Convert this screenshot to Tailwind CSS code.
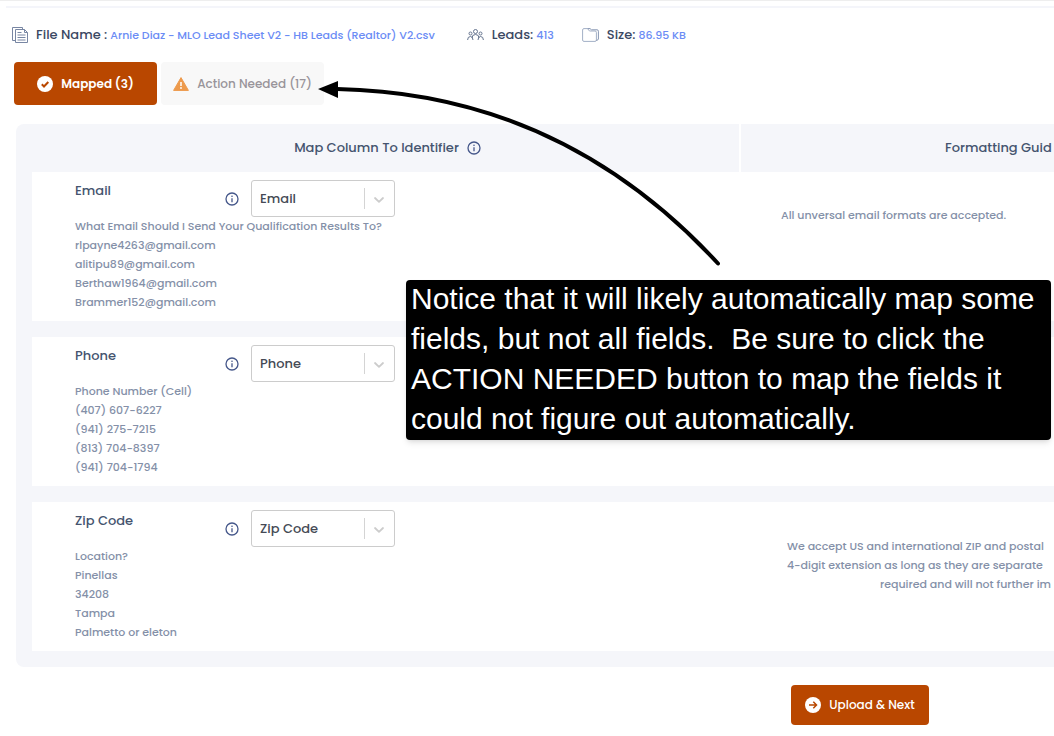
<!DOCTYPE html>
<html lang="en">
<head>
<meta charset="utf-8">
<title>Map columns</title>
<script src="https://cdn.jsdelivr.net/npm/@tailwindcss/browser@4"></script>
</head>
<body class="relative min-h-screen overflow-x-hidden bg-white font-['Poppins','Inter',sans-serif] text-[#8490a8]">
<svg class="hidden">
  <symbol id="info" viewBox="0 0 14 14"><circle cx="7" cy="7" r="6" fill="none" stroke="currentColor" stroke-width="1.3"/><path d="M7 6.2v4" stroke="currentColor" stroke-width="1.3"/><circle cx="7" cy="4.2" r=".8" fill="currentColor"/></symbol>
  <symbol id="chevron" viewBox="0 0 12 8"><path d="M2 2 6 5.800l4-3.800" fill="none" stroke="currentColor" stroke-width="1.8" stroke-linecap="round" stroke-linejoin="round"/></symbol>
</svg>
<div class="h-px bg-[#eeeeee]"></div>
<div class="mt-[5px] ml-1.5 h-0.5 bg-[#f4f5fa]"></div>

<header class="flex items-center pt-4 pl-3 text-[13px] leading-[22px] font-medium whitespace-nowrap text-[#3b4863]">
  <svg class="mr-2 size-4 shrink-0" viewBox="0 0 16 16" fill="none" stroke="#7886a3" stroke-width="1"><path d="M3.500 13.500H.500V.500h10v2"/><path d="M3.500 2.500h9l3 3v10h-12z"/><path d="M12.500 2.500v3h3M5.500 5.500h4M5.500 8h8M5.500 10.500h8M5.500 13h8"/></svg>
  <span>File Name :</span>
  <span class="ml-[3px] text-[11px] text-[#6b8cf5]">Arnie Diaz - MLO Lead Sheet V2 - HB Leads (Realtor) V2.csv</span>
  <svg class="mr-2 ml-8 h-3 w-[17px] shrink-0" viewBox="0 0 17 12" fill="none" stroke="#66758f" stroke-width="1"><circle cx="8.500" cy="2.500" r="2"/><circle cx="3.500" cy="4.500" r="1.500"/><circle cx="13.500" cy="4.500" r="1.500"/><path d="M5 9q0-3.500 3.500-3.500T12 9M.600 11q0-3.500 2.900-3.500Q5.800 7.500 6 11M16.400 11q0-3.500-2.900-3.500-2.300 0-2.500 3.500"/></svg>
  <span>Leads:</span>
  <span class="ml-[3px] text-[11px] text-[#6b8cf5]">413</span>
  <svg class="mr-2 ml-7 h-[14px] w-[17px] shrink-0" viewBox="0 0 17 14" fill="none" stroke="#a3b0c6" stroke-width="1"><path d="M.600 12V2Q.600.600 2 .600h3.500l2 2.400h5.500q1.400 0 1.400 1.400V12q0 1.400-1.400 1.400H2Q.600 13.400.600 12z"/><path d="M5.500.600h2.500l1.500 1.200h5.500q1.400 0 1.400 1.400V11q0 1-2 1.500" stroke="#8796b2"/></svg>
  <span>Size:</span>
  <span class="ml-[3px] text-[11px] text-[#6b8cf5]">86.95 KB</span>
</header>

<nav class="mt-4 flex gap-1 pl-3.5 text-xs font-semibold">
  <button class="flex h-[43px] w-[143px] items-center justify-center gap-2 rounded bg-[#b94700] text-white">
    <svg class="size-4" viewBox="0 0 16 16"><circle cx="8" cy="8" r="8" fill="#fff"/><path d="m4.800 8.300 2.200 2.200 4.300-4.500" fill="none" stroke="#b94700" stroke-width="2"/></svg>
    Mapped (3)
  </button>
  <button class="flex h-[43px] w-[163px] items-center justify-center gap-2 rounded bg-[#f8f8f8] font-medium text-[#98949a]">
    <svg class="h-[14px] w-4" viewBox="0 0 16 14"><path d="M8 .600 15.400 13.400H.600z" fill="#ed9a4c" stroke="#ed9a4c" stroke-linejoin="round"/><path d="M8 5v4" stroke="#fff" stroke-width="1.500"/><circle cx="8" cy="11" r=".9" fill="#fff"/></svg>
    Action Needed (17)
  </button>
</nav>

<main class="mt-[19px] ml-4 rounded-l-lg bg-[#f5f6fa] pb-4">
  <div class="flex h-12 text-[13px] font-medium text-[#45546f]">
    <h2 class="flex w-[725px] shrink-0 items-center justify-center gap-2 border-r-2 border-white pl-5">Map Column To Identifier <svg class="size-3.5 text-[#45578a]"><use href="#info"/></svg></h2>
    <h2 class="flex flex-1 items-center pl-51 whitespace-nowrap">Formatting Guid</h2>
  </div>
  <div class="ml-4 flex flex-col gap-4 text-[11px] leading-[19px] font-medium">
    <section class="flex h-[149px] bg-white">
      <div class="w-[709px] shrink-0 pt-2 pl-[43px]">
        <div class="flex h-[37px] items-center">
          <label for="email" class="w-[150px] self-start text-[13px] leading-[21px] text-[#45546f]">Email</label>
          <svg class="mr-3 size-3.5 text-[#45578a]"><use href="#info"/></svg>
          <div class="relative w-[144px]">
            <select id="email" class="h-[37px] w-full appearance-none rounded-[3px] border border-[#cccccc] bg-white pl-2 text-[13px] text-[#454a55]"><option>Email</option></select>
            <span class="pointer-events-none absolute inset-y-2 right-[30px] w-px bg-[#d4d4d4]"></span>
            <svg class="pointer-events-none absolute top-4 right-2.5 h-2 w-3 text-[#cccccc]"><use href="#chevron"/></svg>
          </div>
        </div>
        <p>What Email Should I Send Your Qualification Results To?</p>
        <p>rlpayne4263@gmail.com</p>
        <p>alitipu89@gmail.com</p>
        <p>Berthaw1964@gmail.com</p>
        <p>Brammer152@gmail.com</p>
      </div>
      <div class="flex-1 pt-[34px] pl-10 whitespace-nowrap">All unversal email formats are accepted.</div>
    </section>
    <section class="flex h-[149px] bg-white">
      <div class="w-[709px] shrink-0 pt-2 pl-[43px]">
        <div class="flex h-[37px] items-center">
          <label for="phone" class="w-[150px] self-start text-[13px] leading-[21px] text-[#45546f]">Phone</label>
          <svg class="mr-3 size-3.5 text-[#45578a]"><use href="#info"/></svg>
          <div class="relative w-[144px]">
            <select id="phone" class="h-[37px] w-full appearance-none rounded-[3px] border border-[#cccccc] bg-white pl-2 text-[13px] text-[#454a55]"><option>Phone</option></select>
            <span class="pointer-events-none absolute inset-y-2 right-[30px] w-px bg-[#d4d4d4]"></span>
            <svg class="pointer-events-none absolute top-4 right-2.5 h-2 w-3 text-[#cccccc]"><use href="#chevron"/></svg>
          </div>
        </div>
        <p>Phone Number (Cell)</p>
        <p>(407) 607-6227</p>
        <p>(941) 275-7215</p>
        <p>(813) 704-8397</p>
        <p>(941) 704-1794</p>
      </div>
    </section>
    <section class="flex h-[149px] bg-white">
      <div class="w-[709px] shrink-0 pt-2 pl-[43px]">
        <div class="flex h-[37px] items-center">
          <label for="zip" class="w-[150px] self-start text-[13px] leading-[21px] text-[#45546f]">Zip Code</label>
          <svg class="mr-3 size-3.5 text-[#45578a]"><use href="#info"/></svg>
          <div class="relative w-[144px]">
            <select id="zip" class="h-[37px] w-full appearance-none rounded-[3px] border border-[#cccccc] bg-white pl-2 text-[13px] text-[#454a55]"><option>Zip Code</option></select>
            <span class="pointer-events-none absolute inset-y-2 right-[30px] w-px bg-[#d4d4d4]"></span>
            <svg class="pointer-events-none absolute top-4 right-2.5 h-2 w-3 text-[#cccccc]"><use href="#chevron"/></svg>
          </div>
        </div>
        <p>Location?</p>
        <p>Pinellas</p>
        <p>34208</p>
        <p>Tampa</p>
        <p>Palmetto or eleton</p>
      </div>
      <div class="flex-1 pt-[35px] pl-[46px] whitespace-nowrap">
        <p>We accept US and international ZIP and postal</p>
        <p>4-digit extension as long as they are separate</p>
        <p class="pl-[93px]">required and will not further im</p>
      </div>
    </section>
  </div>
</main>

<footer class="mt-[18px] flex justify-end pr-[125px] text-xs font-medium">
  <button class="flex h-10 w-[138px] items-center justify-center gap-2 rounded bg-[#b94700] text-white">
    <svg class="size-4" viewBox="0 0 16 16"><circle cx="8" cy="8" r="8" fill="#fff"/><path d="M4 8h7.500M8.300 4.800 11.500 8l-3.200 3.200" fill="none" stroke="#b94700" stroke-width="1.500"/></svg>
    Upload &amp; Next
  </button>
</footer>

<svg class="pointer-events-none absolute top-[70px] left-[300px] h-[200px] w-[430px]" viewBox="0 0 430 200"><path d="M37 19C190 22 315 82 418 193.500" fill="none" stroke="#000" stroke-width="4" stroke-linecap="round"/><path d="M18 19 38 11v17z"/></svg>
<aside class="absolute top-[280px] left-[406px] h-40 w-[645px] rounded bg-black pl-[5px] font-['Liberation_Sans',Arial,sans-serif] text-[30px] leading-10 whitespace-pre text-white shadow-md"><p class="-mt-px">Notice that it will likely automatically map some
fields, but not all fields.  Be sure to click the
ACTION NEEDED button to map the fields it
could not figure out automatically.</p></aside>
</body>
</html>
